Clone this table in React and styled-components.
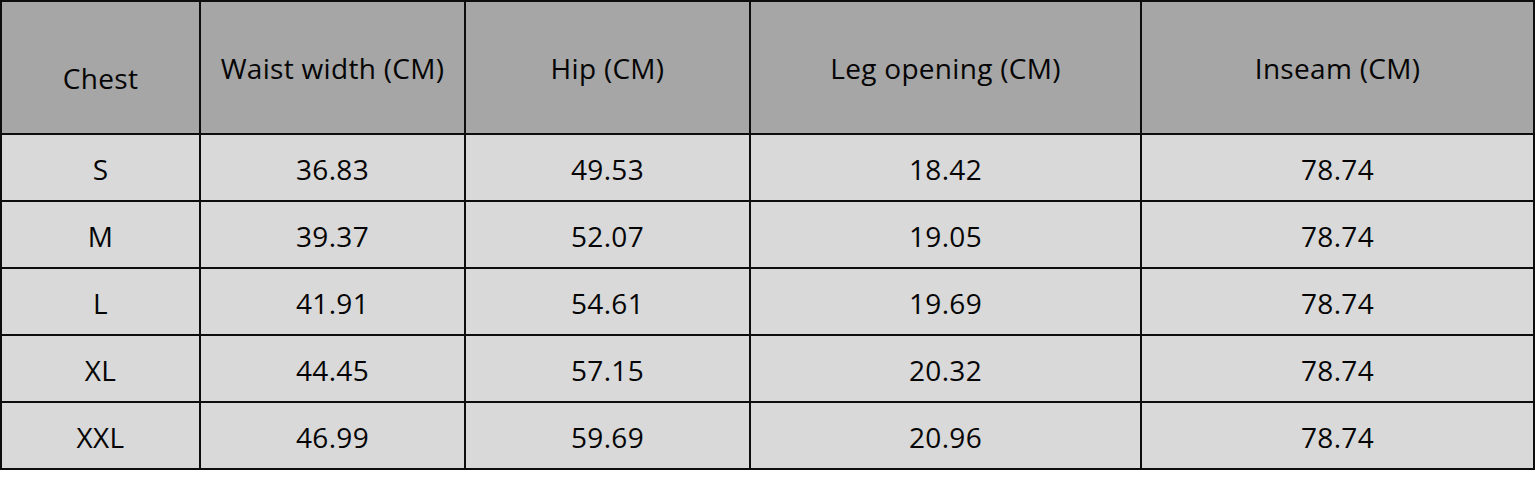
import React from "react";
import styled, { createGlobalStyle } from "styled-components";

const GlobalStyle = createGlobalStyle`
  html, body {
    margin: 0;
    padding: 0;
    background: #ffffff;
  }
  body {
    font-family: "Open Sans", Lato, "Liberation Sans", sans-serif;
  }
`;

const Table = styled.table`
  border-collapse: collapse;
  table-layout: fixed;
  width: 1533px;
  color: #050505;
  font-size: 28px;
  letter-spacing: 0.3px;
`;

const HeadCell = styled.th`
  height: 133px;
  background: #a6a6a6;
  border: 2px solid #0d0d0d;
  font-weight: 400;
  text-align: center;
  vertical-align: middle;
  padding: ${(p) => (p.$low ? "20px 0 0" : "0")};
  box-sizing: border-box;
`;

const Cell = styled.td`
  height: 67px;
  background: #d9d9d9;
  border: 2px solid #0d0d0d;
  text-align: center;
  vertical-align: middle;
  padding: 2px 0 0;
  box-sizing: border-box;
`;

const columns = [
  { label: "Chest", width: 199, low: true },
  { label: "Waist width (CM)", width: 265 },
  { label: "Hip (CM)", width: 285 },
  { label: "Leg opening (CM)", width: 391 },
  { label: "Inseam (CM)", width: 393 },
];

const rows = [
  ["S", "36.83", "49.53", "18.42", "78.74"],
  ["M", "39.37", "52.07", "19.05", "78.74"],
  ["L", "41.91", "54.61", "19.69", "78.74"],
  ["XL", "44.45", "57.15", "20.32", "78.74"],
  ["XXL", "46.99", "59.69", "20.96", "78.74"],
];

export default function App() {
  return (
    <>
      <GlobalStyle />
      <Table>
        <colgroup>
          {columns.map((c) => (
            <col key={c.label} style={{ width: c.width }} />
          ))}
        </colgroup>
        <thead>
          <tr>
            {columns.map((c) => (
              <HeadCell key={c.label} $low={c.low}>
                {c.label}
              </HeadCell>
            ))}
          </tr>
        </thead>
        <tbody>
          {rows.map((r) => (
            <tr key={r[0]}>
              {r.map((v, i) => (
                <Cell key={i}>{v}</Cell>
              ))}
            </tr>
          ))}
        </tbody>
      </Table>
    </>
  );
}
